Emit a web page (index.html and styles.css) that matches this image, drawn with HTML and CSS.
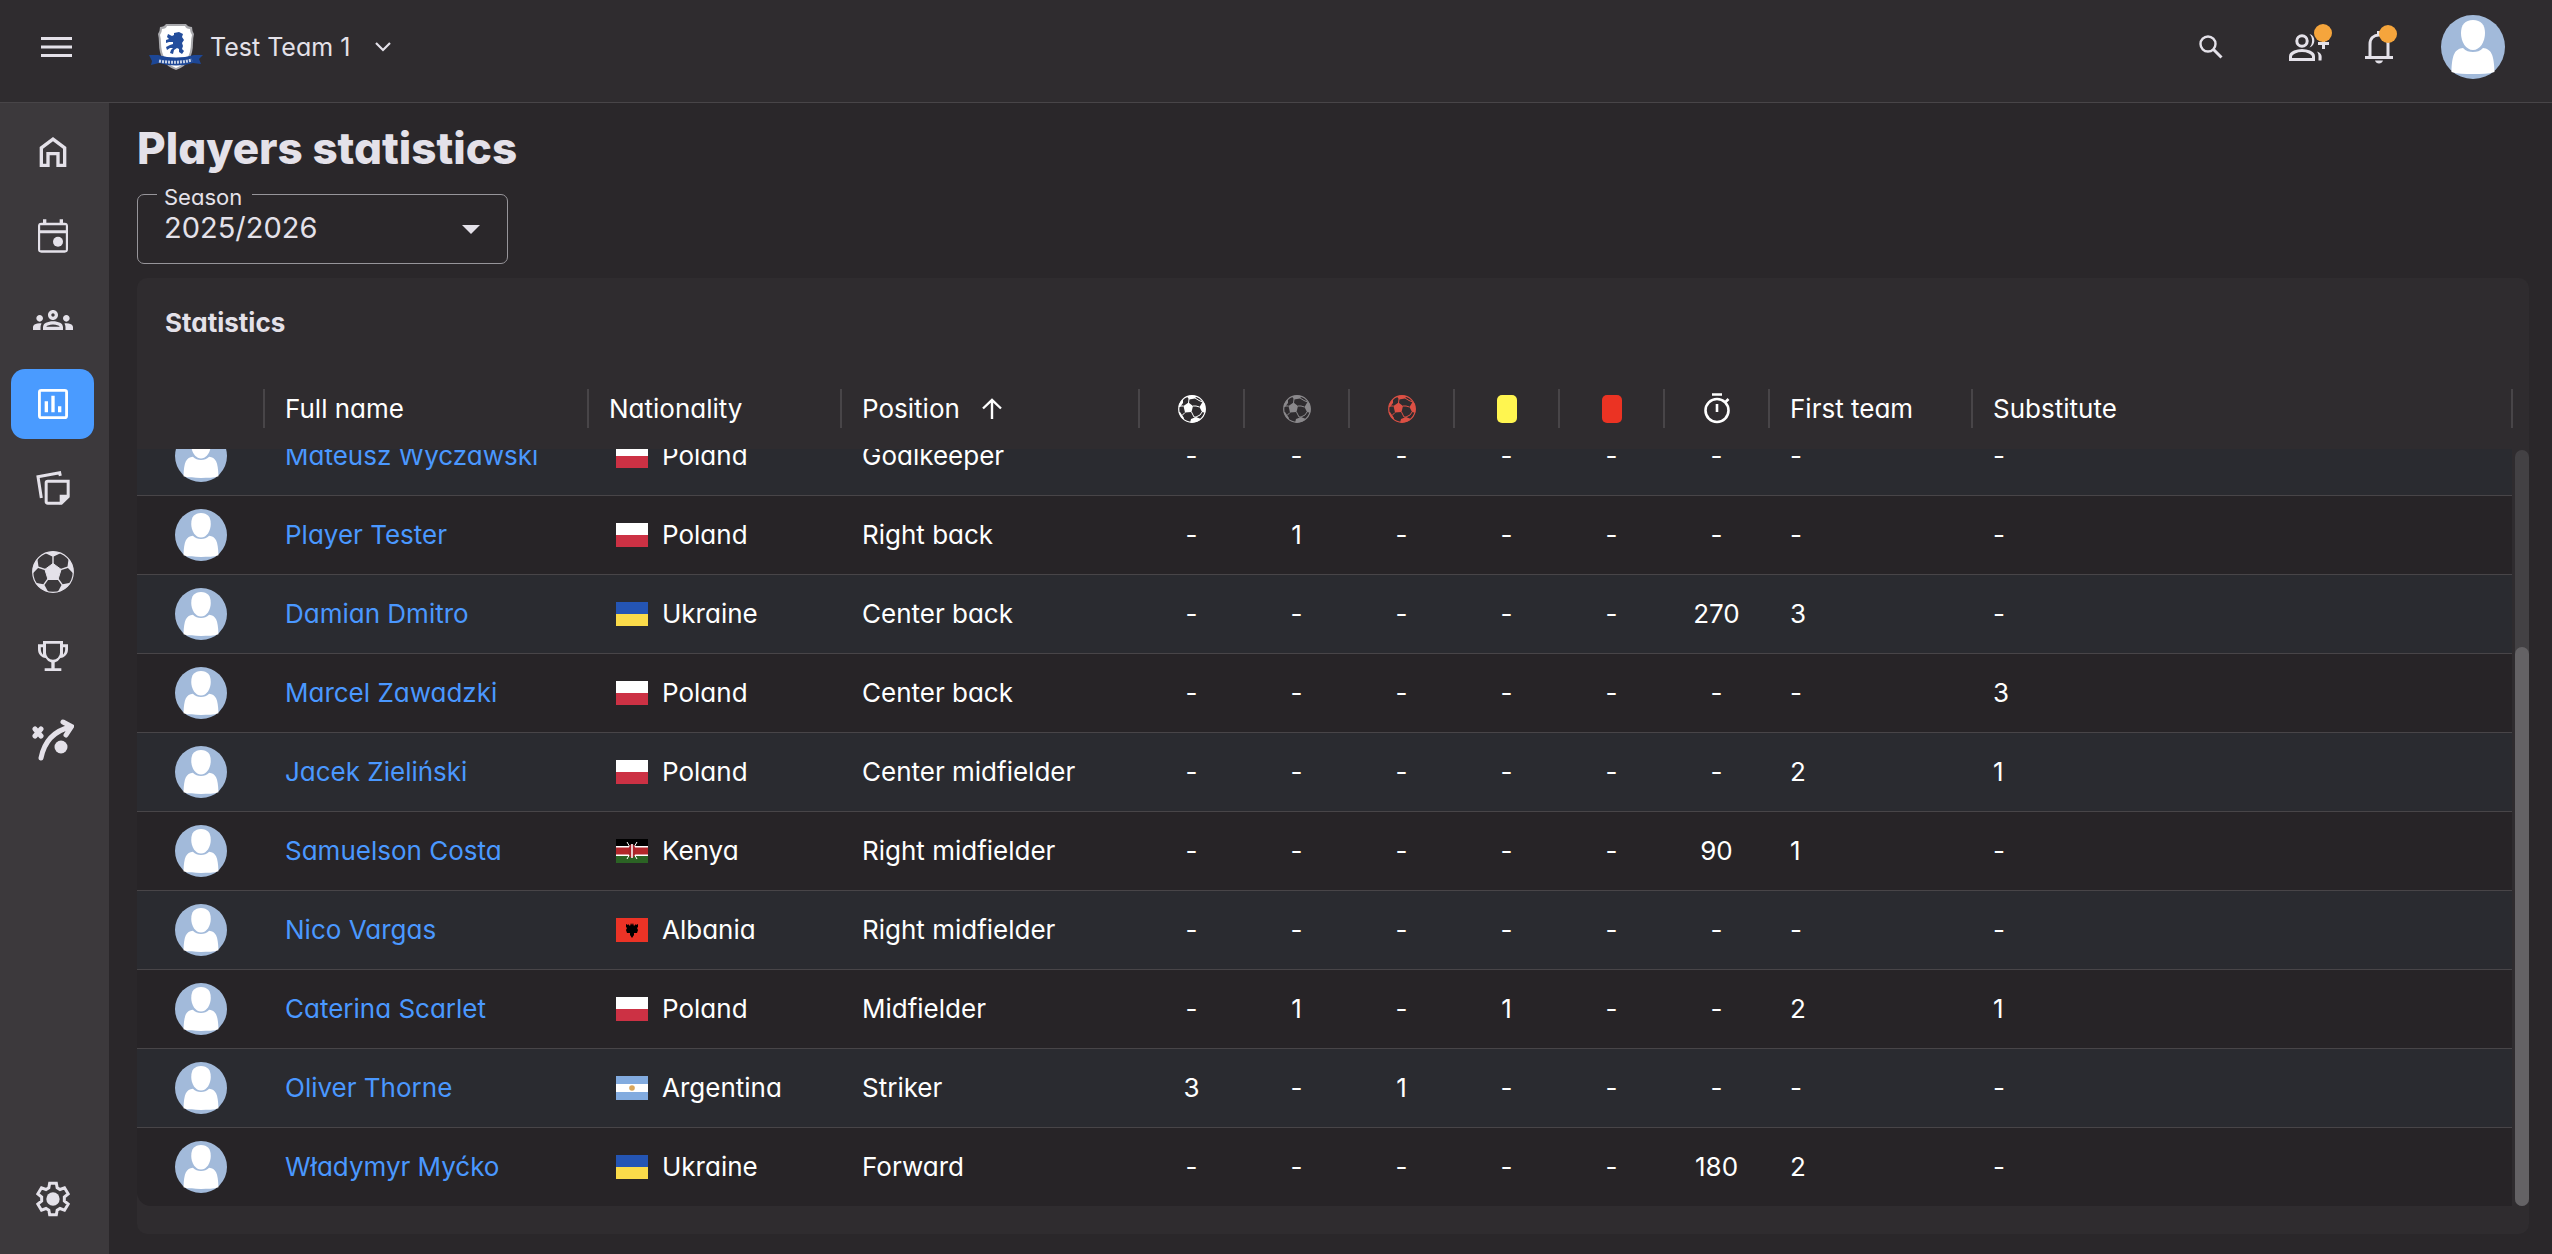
FILE: index.html
```html
<!DOCTYPE html>
<html lang="en">
<head>
<meta charset="utf-8">
<title>Players statistics</title>
<meta name="viewport" content="width=device-width, initial-scale=1">
<link rel="stylesheet" href="styles.css">
</head>
<body>
<svg class="sprite" aria-hidden="true">
  <symbol id="avatar" viewBox="0 0 64 64">
    <circle cx="32" cy="32" r="32" fill="#a2bada"/>
    <path d="M32 5c8 0 12 5 12 13 0 9-5 17-12 17s-12-8-12-17c0-8 4-13 12-13z" fill="#fff"/>
    <path d="M22 33c3 3 6 4 10 4s7-1 10-4c8 1 11 6 11.500 24-6 2-13 2-21.500 2s-15.500 0-21.500-2c.5-18 3.500-23 11.500-24z" fill="#fff"/>
  </symbol>
  <symbol id="ball" viewBox="0 0 28 28">
    <clipPath id="ball-clip"><circle cx="14" cy="14" r="13.500"/></clipPath>
    <circle cx="14" cy="14" r="13.300" fill="none" stroke="currentColor" stroke-width="1.200"/>
    <g clip-path="url(#ball-clip)" fill="currentColor" stroke="currentColor" stroke-width="1">
      <path stroke="none" d="M5.500 11l5-3.500 4.500 3.500-1.500 6-6.500.5zM8 0h11l-2 3.500-6 1zM28 6v12l-4-1-2.500-5 3-5zM12 28l1-4 5-2 5 2-3 4zM0 9l3-4 2 0 0 3-3 4H0zM0 17l2 0 4 6-1 3z"/>
      <path fill="none" d="M10.500 8L11 4M17 3l4 2.500 3.500 1.500M15 11h3l3.500 1M13.500 17l2.500 5M7 17.500L4 20.500M5.500 11L2 11M18 22l4-2 2-3M16 22l2 0"/>
    </g>
  </symbol>
</svg>

<header class="topbar">
  <button class="icon-btn menu-btn" aria-label="Open menu">
    <svg width="32" height="22" viewBox="0 0 32 22" fill="currentColor"><path d="M0 1h31v3H0zM0 9.500h31v3H0zM0 18h31v3H0z"/></svg>
  </button>
  <button class="team">
    <svg width="54" height="46" viewBox="0 0 54 46" aria-hidden="true">
      <path d="M11 3q4 0 6-3h20q2 3 6 3 0 4 2 7-1 4-1 9 0 10-4 17-4 7-13 10-9-3-13-10-4-7-4-17 0-5-1-9 2-3 2-7z" fill="#a9a9ad"/>
      <path d="M13 5q4 0 5-3h18q1 3 5 3 0 3 2 6-1 4-1 8 0 9-4 16-3 6-11 9-8-3-11-9-4-7-4-16 0-4-1-8 2-3 2-6z" fill="#fff"/>
      <path d="M25 9l5-1 4 2-1 3 2 3-2 3 1 3-1 3 2 2-2 3-3-2 0-3-2-1-3 2-1 4-3-1 1-3 2-2-3 0-3 2-1-3 4-2 3-1 0-2-4 0-3 1 0-3 3-1-2-2 1-3 4 2 2-1z" fill="#234d9c"/>
      <path d="M0 31h9q18 5 36 0h9l-4 4 2 5-8-1q-17 5-34 0l-8 2 1-4z" fill="#1d4796"/>
      <path d="M10 37q17 3 33-1" fill="none" stroke="#c6d2e8" stroke-width="3" stroke-dasharray="2 1"/>
    </svg>
    <span>Test Team 1</span>
    <svg class="chevron" width="16" height="10" viewBox="0 0 16 10" fill="none" stroke="currentColor" stroke-width="2.200"><path d="M1 1l7 7 7-7"/></svg>
  </button>
  <nav class="top-actions" aria-label="Account">
    <button class="icon-btn search-btn" aria-label="Search">
      <svg width="24" height="24" viewBox="0 0 24 24" fill="none" stroke="currentColor" stroke-width="2.400"><circle cx="9" cy="9" r="7.500"/><path d="M14 14l8.500 8.500" stroke-width="3"/></svg>
    </button>
    <button class="icon-btn requests-btn" aria-label="Requests">
      <svg width="40" height="27" viewBox="0 0 40 27" fill="none" stroke="currentColor" stroke-width="3"><circle cx="13" cy="7" r="5.200"/><path d="M1.500 25.500v-3c0-4 7-6 11.500-6s11.500 2 11.500 6v3z"/><path d="M20.500 0c7 2 6 12 0 13.500 3.500-3.500 3.500-10 0-13.500z" fill="currentColor" stroke="none"/><path d="M28 17.500c5 2 5 4 4.500 9h-3c0-4 .5-6-1.500-9z" fill="currentColor" stroke="none"/><path d="M34.500 4v11M29 9.500h11"/></svg>
      <span class="badge"></span>
    </button>
    <button class="icon-btn bell-btn" aria-label="Notifications">
      <svg width="28" height="34" viewBox="0 0 28 34" fill="none" stroke="currentColor" stroke-width="3"><path d="M0 27.500h28M5 27V14c0-6 4-9 9-9s9 3 9 9v13"/><path d="M14 5V1" stroke-width="4"/><path d="M10 30.500h8c-1 4-7 4-8 0z" fill="currentColor" stroke="none"/></svg>
      <span class="badge"></span>
    </button>
    <button class="icon-btn" aria-label="Profile"><svg width="64" height="64"><use href="#avatar"/></svg></button>
  </nav>
</header>

<div class="shell">
  <nav class="sidebar" aria-label="Main">
    <a href="#home" aria-label="Home"><svg viewBox="0 0 24 24"><path d="M12 3l8 6v12h-6v-7h-4v7H4V9zM6 19h2v-7h8v7h2v-9l-6-4.500L6 10z"/></svg></a>
    <a href="#calendar" aria-label="Calendar"><svg viewBox="0 0 24 24"><path d="M19 4h-1V2h-2v2H8V2H6v2H5a2 2 0 0 0-2 2v14a2 2 0 0 0 2 2h14a2 2 0 0 0 2-2V6a2 2 0 0 0-2-2zm.7 16.600H4.300V10.300h15.400zM19.700 8.500H4.300V5.600h15.400z"/><circle cx="15" cy="15.500" r="3"/></svg></a>
    <a href="#squad" aria-label="Squad"><svg viewBox="0 0 24 24"><path d="M4 13c1.100 0 2-.9 2-2s-.9-2-2-2-2 .9-2 2 .9 2 2 2zm1.130 1.100C4.760 14.040 4.390 14 4 14c-.99 0-1.930.21-2.780.58C.48 14.900 0 15.620 0 16.430V18h4.500v-1.610c0-.83.23-1.610.63-2.290zM20 13c1.100 0 2-.9 2-2s-.9-2-2-2-2 .9-2 2 .9 2 2 2zm4 3.430c0-.81-.48-1.530-1.220-1.850C21.930 14.210 20.990 14 20 14c-.39 0-.76.04-1.130.1.400.68.63 1.460.63 2.290V18H24zM16.240 13.650C15.070 13.130 13.630 12.750 12 12.750s-3.070.39-4.240.9C6.680 14.130 6 15.210 6 16.390V18h12v-1.610c0-1.180-.68-2.260-1.760-2.740zM8.070 16c.09-.23.13-.39.91-.69.97-.38 1.990-.56 3.020-.56s2.050.18 3.020.56c.77.3.81.46.91.69zM12 8c.55 0 1 .45 1 1s-.45 1-1 1-1-.45-1-1 .45-1 1-1m0-2c-1.660 0-3 1.340-3 3s1.340 3 3 3 3-1.340 3-3-1.340-3-3-3z"/></svg></a>
    <a href="#statistics" aria-label="Statistics" class="active" aria-current="page"><svg viewBox="0 0 24 24"><path d="M19 3H5a2 2 0 0 0-2 2v14a2 2 0 0 0 2 2h14a2 2 0 0 0 2-2V5a2 2 0 0 0-2-2zm.3 16.300H4.700V4.700h14.600zM7 10.300h2V17H7zM11 7h2v10h-2zM15 13.300h2V17h-2z"/></svg></a>
    <a href="#notes" aria-label="Notes"><svg viewBox="0 0 24 24" fill="none"><path fill="none" stroke="currentColor" stroke-width="1.800" d="M5 18L3 5.300 16 2.900l.4 1.800M9 7.900h12.100v9.200L17 21.100H8.900a1 1 0 0 1-1-1V8.900a1 1 0 0 1 1-1z"/><path d="M16 22v-6h6z"/></svg></a>
    <a href="#matches" aria-label="Matches"><svg class="wide" viewBox="-21 -21 42 42">
      <clipPath id="side-clip"><circle r="20.500"/></clipPath>
      <circle r="20.300" fill="none" stroke="currentColor" stroke-width="1.200"/>
      <path d="M0-8.500L8.100-2.600 5 7.500H-5L-8.100-2.600z" stroke="currentColor" stroke-linejoin="round"/>
      <g clip-path="url(#side-clip)">
        <path id="patch" d="M-.7-7v-8.500L-9-19.500-10-22H10L9-19.500.7-15.500V-7z"/>
        <use href="#patch" transform="rotate(72)"/><use href="#patch" transform="rotate(144)"/><use href="#patch" transform="rotate(216)"/><use href="#patch" transform="rotate(288)"/>
      </g></svg></a>
    <a href="#competitions" aria-label="Competitions"><svg viewBox="0 0 24 24"><path d="M18 5V3H6v2H3v3c0 3 2 5 4.600 5.200A5.500 5.500 0 0 0 11 15.900V19.300H7V21h10v-1.700h-4V15.900a5.500 5.500 0 0 0 3.400-2.700C19 13 21 11 21 8V5zM4.700 8V6.700H6v4.500C5.200 10.500 4.700 9.300 4.700 8zM12 14.300A4.300 4.300 0 0 1 7.800 10V4.700h8.400V10a4.300 4.300 0 0 1-4.200 4.300zM19.300 8c0 1.300-.5 2.500-1.300 3.200V6.700h1.300z"/></svg></a>
    <a href="#tactics" aria-label="Tactics"><svg class="wide" viewBox="0 0 42 42" fill="none" stroke="currentColor" stroke-linecap="round"><path fill="none" stroke-width="5" d="M9 39Q14 14 38 8M31 3l8.500 4.500L34 16"/><path stroke-width="5" d="M3 10l6 7M9 10l-6 7"/><circle cx="29" cy="28" r="6.500" stroke="none"/></svg></a>
    <a href="#settings" aria-label="Settings" class="settings"><svg viewBox="0 0 24 24"><path d="M10 2.500h4l.5 2.800 1.700 1 2.700-1 2.200 3.600-2.300 1.900v2.400l2.300 1.900-2.200 3.600-2.700-1-1.700 1-.5 2.800h-4l-.5-2.800-1.700-1-2.700 1-2.200-3.600 2.300-1.900v-2.400L2.900 8.900l2.200-3.600 2.700 1 1.700-1z" fill="none" stroke="currentColor" stroke-width="1.800"/><circle cx="12" cy="12" r="4"/></svg></a>
  </nav>

  <main class="content">
    <h1>Players statistics</h1>
    <div class="field">
      <label for="season">Season</label>
      <select id="season"><option>2025/2026</option></select>
    </div>
    <section class="card">
      <h2>Statistics</h2>
      <div class="grid-area">
        <table>
          <thead>
            <tr>
              <th aria-label="Photo"></th>
              <th>Full name</th>
              <th>Nationality</th>
              <th>Position <svg class="sort" width="20" height="22" viewBox="0 0 20 22" fill="none" stroke="currentColor" stroke-width="2.400"><path d="M10 21V2M1 10.500L10 2l9 8.500"/></svg></th>
              <th class="num" aria-label="Goals"><svg width="28" height="28"><use href="#ball"/></svg></th>
              <th class="num muted" aria-label="Assists"><svg width="28" height="28"><use href="#ball"/></svg></th>
              <th class="num own" aria-label="Own goals"><svg width="28" height="28"><use href="#ball"/></svg></th>
              <th class="num" aria-label="Yellow cards"><span class="booking yellow"></span></th>
              <th class="num" aria-label="Red cards"><span class="booking red"></span></th>
              <th class="num" aria-label="Minutes"><svg class="watch" width="28" height="32" viewBox="0 0 28 32" fill="none" stroke="currentColor" stroke-width="2.600"><circle cx="14" cy="17.500" r="11.500"/><path d="M9 1.500h10M14 11v8M22.500 9l3-3"/></svg></th>
              <th>First team</th>
              <th>Substitute</th>
            </tr>
          </thead>
          <tbody id="rows"></tbody>
        </table>
        <div class="scrollbar"><div class="thumb"></div></div>
      </div>
    </section>
  </main>
</div>
<script src="app.js"></script>
</body>
</html>
```
FILE: styles.css
```css
* { box-sizing: border-box; }

:root {
  --bg: #2a272a;
  --surface: #2f2c2f;
  --rail: #3c393c;
  --line: #484548;
  --text: #e4e1e9;
  --link: #4a98ff;
}

body {
  margin: 0;
  height: 100vh;
  display: flex;
  flex-direction: column;
  background: var(--bg);
  color: var(--text);
  font-family: Inter, "Noto Sans", sans-serif;
  font-feature-settings: "cv11";
  font-size: 26px;
  overflow: hidden;
}

button {
  border: 0;
  padding: 0;
  background: none;
  color: inherit;
  font: inherit;
  font-feature-settings: inherit;
}

svg { display: block; }

.sprite { position: absolute; width: 0; height: 0; }

.topbar {
  flex: none;
  height: 103px;
  padding: 0 47px 8px 41px;
  display: flex;
  align-items: center;
  background: var(--surface);
  border-bottom: 1px solid var(--line);
}

.icon-btn { position: relative; }

.team {
  margin-left: 76px;
  display: flex;
  align-items: center;
  gap: 7px;
  font-size: 25px;
}

.chevron { margin-left: 18px; }

.top-actions {
  margin-left: auto;
  display: flex;
  align-items: center;
}

.search-btn { margin-right: 66px; }
.requests-btn { margin-right: 36px; }
.bell-btn { margin-right: 48px; }

.badge {
  position: absolute;
  top: -5px;
  right: -4px;
  width: 18px;
  height: 18px;
  border-radius: 50%;
  background: #f5a53c;
}

.requests-btn .badge { top: -10px; right: -3px; }

.shell {
  flex: 1;
  min-height: 0;
  display: flex;
}

.sidebar {
  flex: none;
  width: 109px;
  padding: 14px 15px 20px 11px;
  display: flex;
  flex-direction: column;
  gap: 14px;
  background: var(--rail);
}

.sidebar a {
  height: 70px;
  display: flex;
  align-items: center;
  justify-content: center;
  border-radius: 14px;
  color: var(--text);
}

.sidebar a.active { background: #4a9bff; color: #fff; }
.sidebar svg { width: 40px; height: 40px; fill: currentColor; }
.sidebar svg.wide { width: 42px; height: 42px; }
.sidebar .settings { margin-top: auto; }

.content {
  flex: 1;
  min-width: 0;
  padding: 19px 23px 20px 28px;
  display: flex;
  flex-direction: column;
}

h1 {
  margin: 0;
  font-size: 44px;
  line-height: 52px;
  font-weight: 800;
}

.field {
  position: relative;
  margin-top: 20px;
  width: 371px;
}

.field label {
  position: absolute;
  top: -11px;
  left: 20px;
  padding: 0 10px 0 7px;
  background: var(--bg);
  font-size: 22px;
  line-height: 28px;
}

.field select {
  display: block;
  width: 100%;
  height: 70px;
  padding: 0 26px 3px;
  border: 1px solid #97959a;
  border-radius: 7px;
  appearance: none;
  background: transparent;
  color: var(--text);
  font: inherit;
  font-feature-settings: inherit;
  font-size: 29px;
}

.field::after {
  content: "";
  position: absolute;
  top: 31px;
  right: 28px;
  border: 9px solid transparent;
  border-top-color: var(--text);
  border-bottom: 0;
  pointer-events: none;
}

.card {
  flex: 1;
  min-height: 0;
  margin-top: 14px;
  padding-bottom: 28px;
  display: flex;
  flex-direction: column;
  border-radius: 10px;
  background: var(--surface);
}

h2 {
  margin: 0;
  padding: 29px 28px 0;
  font-size: 26px;
  line-height: 32px;
  font-weight: 700;
}

.grid-area {
  flex: 1;
  min-height: 0;
  margin-top: 27px;
  display: flex;
  gap: 3px;
}

table {
  flex: 1;
  min-width: 0;
  display: flex;
  flex-direction: column;
  color: #fff;
}

thead { display: block; }

tr {
  display: grid;
  grid-template-columns: 127px 324px 253px 298px repeat(6, 105px) 203px 1fr;
}

th {
  position: relative;
  height: 83px;
  padding: 2px 21px 0;
  display: flex;
  align-items: center;
  font-weight: 400;
}

th::after {
  content: "";
  position: absolute;
  top: 23px;
  right: -1px;
  width: 2px;
  height: 39px;
  background: var(--line);
}

/* the list is scrolled to its end: the last row rests on the bottom edge */
tbody {
  flex: 1;
  min-height: 0;
  display: flex;
  flex-direction: column;
  justify-content: flex-end;
  overflow: hidden;
  border-radius: 0 0 0 14px;
}

tbody tr {
  flex: none;
  height: 79px;
  border-top: 1px solid var(--line);
  background: #272427;
}

tbody tr:nth-child(odd) { background: #2a2b30; }

td {
  padding: 0 21px 1px;
  display: flex;
  align-items: center;
  white-space: nowrap;
}

td.photo { padding-bottom: 0; }

td a { color: var(--link); text-decoration: none; }

.num { justify-content: center; }
.photo { justify-content: center; }
.muted { color: #8a888b; }
.own { color: #dc5044; }
.sort { margin-left: 22px; }

.flag {
  flex: none;
  width: 32px;
  height: 24px;
  margin: 0 14px 0 7px;
}

.booking { width: 20px; height: 28px; border-radius: 5px; }
.yellow { background: #fff550; }
.red { background: #eb3323; }

.scrollbar {
  flex: none;
  width: 14px;
  margin-top: 84px;
  display: flex;
  flex-direction: column;
  justify-content: flex-end;
  border-radius: 7px;
  background: #434144;
}

.thumb {
  height: 74%;
  border-radius: 7px;
  background: #646265;
}
```
FILE: app.js
```js
const flags = {
  Poland: '<path fill="#fff" d="M0 0h32v12H0z"/><path fill="#cc3144" d="M0 12h32v12H0z"/>',
  Ukraine: '<path fill="#2455b4" d="M0 0h32v12H0z"/><path fill="#fadb4a" d="M0 12h32v12H0z"/>',
  Kenya: '<path d="M0 0h32v8H0z"/><path fill="#fff" d="M0 7h32v10H0z"/><path fill="#b3262a" d="M0 8.500h32v7H0z"/><path fill="#2b6324" d="M0 17h32v7H0z"/><path stroke="#fff" d="M11 3l10 17M21 3L11 20"/><ellipse cx="16" cy="12" rx="3.500" ry="7" fill="#a8232a"/><path stroke="#fff" stroke-width="1.500" d="M16 5v14"/>',
  Albania: '<path fill="#eb3326" d="M0 0h32v24H0z"/><path d="M10 6l2 1 0-1 2 2 1-3 1 2 1-2 1 3 2-2 0 1 2-1v3l-1 1 1 2-1 3-3 0 0 2-2 3-2-3 0-2-3 0-1-3 1-2-1-1z"/>',
  Argentina: '<path fill="#82abdf" d="M0 0h32v24H0z"/><path fill="#fff" d="M0 8h32v8H0z"/><circle cx="16" cy="12" r="2.800" fill="#d9a65a"/>'
};

/* name, nationality, position, goals, assists, own goals, yellow, red, minutes, first team, substitute */
const players = [
  ['Mateusz Wyczawski', 'Poland', 'Goalkeeper', '-', '-', '-', '-', '-', '-', '-', '-'],
  ['Player Tester', 'Poland', 'Right back', '-', '1', '-', '-', '-', '-', '-', '-'],
  ['Damian Dmitro', 'Ukraine', 'Center back', '-', '-', '-', '-', '-', '270', '3', '-'],
  ['Marcel Zawadzki', 'Poland', 'Center back', '-', '-', '-', '-', '-', '-', '-', '3'],
  ['Jacek Zieliński', 'Poland', 'Center midfielder', '-', '-', '-', '-', '-', '-', '2', '1'],
  ['Samuelson Costa', 'Kenya', 'Right midfielder', '-', '-', '-', '-', '-', '90', '1', '-'],
  ['Nico Vargas', 'Albania', 'Right midfielder', '-', '-', '-', '-', '-', '-', '-', '-'],
  ['Caterina Scarlet', 'Poland', 'Midfielder', '-', '1', '-', '1', '-', '-', '2', '1'],
  ['Oliver Thorne', 'Argentina', 'Striker', '3', '-', '1', '-', '-', '-', '-', '-'],
  ['Władymyr Myćko', 'Ukraine', 'Forward', '-', '-', '-', '-', '-', '180', '2', '-']
];

document.getElementById('rows').innerHTML = players.map(([name, country, position, ...stats]) => `
  <tr>
    <td class="photo"><svg width="52" height="52" aria-hidden="true"><use href="#avatar"/></svg></td>
    <td><a href="#player">${name}</a></td>
    <td><svg class="flag" viewBox="0 0 32 24" aria-hidden="true">${flags[country]}</svg>${country}</td>
    <td>${position}</td>
    ${stats.map((value, i) => `<td${i < 6 ? ' class="num"' : ''}>${value}</td>`).join('')}
  </tr>`).join('');
```
